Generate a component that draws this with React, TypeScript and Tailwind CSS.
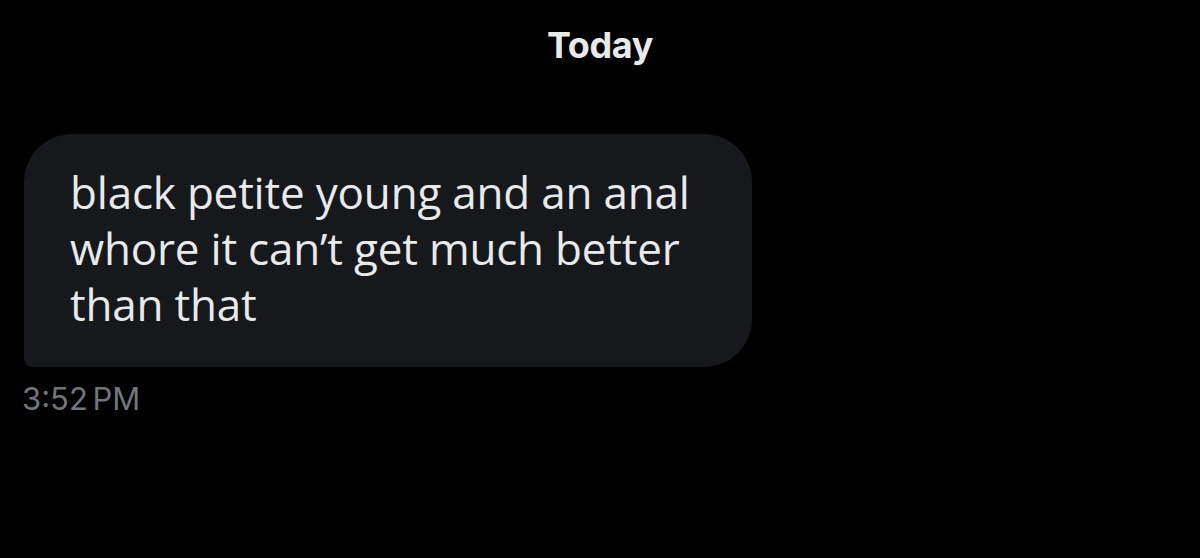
export default function App() {
  return (
    <div className="w-[1200px] h-[558px] bg-black overflow-hidden font-['Inter','Open_Sans',sans-serif]">
      <div className="pt-[18px] text-center">
        <span className="text-[36px] font-bold text-[#e7e9ea] tracking-[-0.4px]">Today</span>
      </div>
      <div className="mt-[62px] pl-[24px]">
        <div className="w-[728px] h-[233px] bg-[#16181c] rounded-[48px] rounded-bl-[8px] pl-[46px] pt-[30px]">
          <p className="text-[44px] leading-[56px] text-[#e7e9ea] tracking-[-0.2px] font-['Open_Sans',sans-serif]">
            black petite young and an anal
            <br />
            whore it can’t get much better
            <br />
            than that
          </p>
        </div>
        <div className="mt-[9px] -ml-[2px] text-[31px] text-[#71767b] tracking-[0px] [word-spacing:-4px]">3:52 PM</div>
      </div>
    </div>
  );
}
